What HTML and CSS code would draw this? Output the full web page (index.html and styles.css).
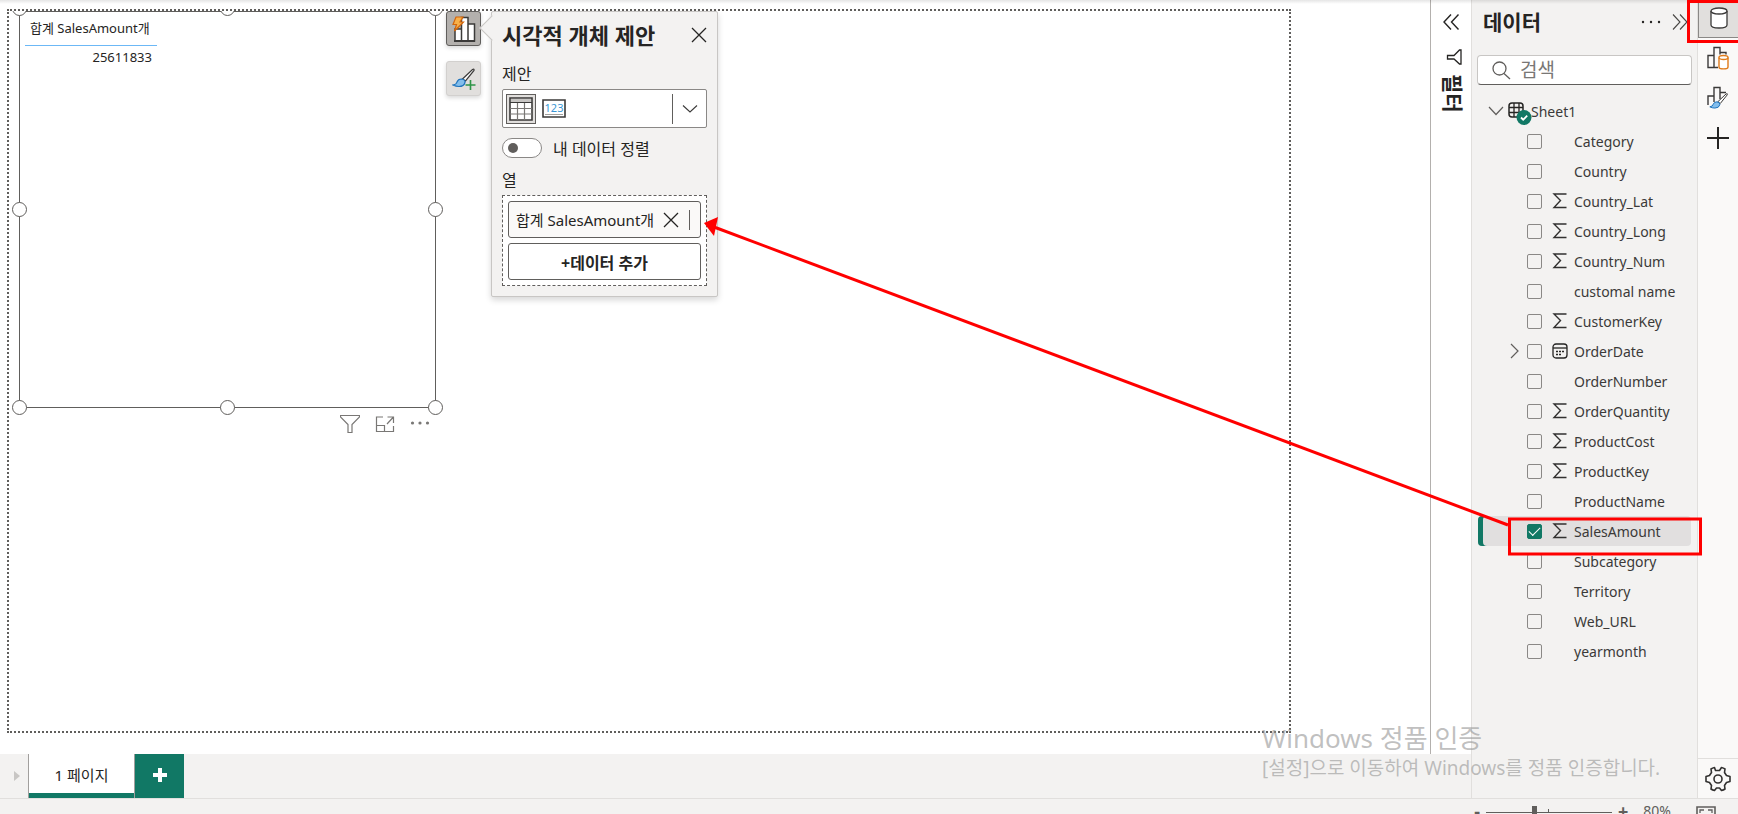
FILE: index.html
```html
<!DOCTYPE html>
<html lang="ko">
<head>
    <meta charset="UTF-8">
    <meta name="viewport" content="width=device-width, initial-scale=1.0">
    <title>Power BI Desktop</title>
    <link rel="stylesheet" href="styles.css">
</head>
<body>
    <!-- Shared icons -->
    <svg class="sprite">
        <symbol id="sigma" viewBox="0 0 14 16"><path d="M13.500 1H1l6.500 6.500L1 14.500H13.500" fill="none" stroke="#323130" stroke-width="1.400"/></symbol>
        <symbol id="close" viewBox="0 0 16 16"><path d="M1 1l14 14M15 1L1 15" fill="none" stroke="#252423" stroke-width="1.300"/></symbol>
        <symbol id="brush" viewBox="0 0 24 20">
            <path d="M10.500 11L20.500 1.500q2-1 1.500 1L13.500 13z" fill="#fff" stroke="#3b3a39" stroke-width="1.200"/>
            <path d="M9.500 11q4 .5 3.500 3.500-1 4-6 4Q4 18.500 1 17q3.500-.5 4-3 1-3 4.500-3z" fill="#83beec" stroke="#1f74bd" stroke-width="1.200"/>
        </symbol>
    </svg>

    <div class="app">
        <div class="workspace">
            <div class="report">
                <div class="report-top">
                    <main class="canvas-area">
                        <div class="page">
                            <!-- Table visual -->
                            <div class="visual-clip">
                                <section class="visual">
                                    <table>
                                        <thead><tr><th>합계 SalesAmount개</th></tr></thead>
                                        <tbody><tr><td>25611833</td></tr></tbody>
                                    </table>
                                    <span class="handle top left"></span>
                                    <span class="handle top center"></span>
                                    <span class="handle top right"></span>
                                    <span class="handle middle left"></span>
                                    <span class="handle middle right"></span>
                                    <span class="handle bottom left"></span>
                                    <span class="handle bottom center"></span>
                                    <span class="handle bottom right"></span>
                                    <div class="visual-actions">
                                        <button type="button" aria-label="필터"><svg width="20" height="20" viewBox="0 0 20 20"><path d="M.5 1.500h19v1.500L12 10.500v8H8v-8L.5 3z" fill="none" stroke="#797775" stroke-width="1.200"/></svg></button>
                                        <button type="button" aria-label="포커스 모드"><svg width="20" height="20" viewBox="0 0 20 20"><path d="M8 3H1.500v14.500h17V12M1.500 11.500h8v6M12 10l6-6.500M12.500 3h6v6" fill="none" stroke="#797775" stroke-width="1.200"/></svg></button>
                                        <button type="button" aria-label="추가 옵션"><svg width="20" height="20" viewBox="0 0 20 20"><g fill="#797775"><circle cx="2.500" cy="9" r="1.600"/><circle cx="10" cy="9" r="1.600"/><circle cx="17.500" cy="9" r="1.600"/></g></svg></button>
                                    </div>
                                </section>
                            </div>

                            <div class="visual-tools">
                                <button type="button" class="tool active" aria-label="시각화 빌드">
                                    <svg width="26" height="28" viewBox="0 0 26 28">
                                        <path d="M4 26V14h6.500v12M10.500 26V2.500H17V26M17 26V9h6.500v17z" fill="#fff" stroke="#3b3a39" stroke-width="1.500"/>
                                        <path d="M3 26h21" stroke="#3b3a39" stroke-width="2"/>
                                        <path d="M5 2h7L9 7h3.500L3.500 16l2-6.500H2z" fill="#f8b04a" stroke="#d2650c" stroke-width="1.200"/>
                                    </svg>
                                </button>
                                <button type="button" class="tool" aria-label="서식 추가">
                                    <svg width="26" height="26" viewBox="0 0 26 26"><use href="#brush" x="1" y="2" width="24" height="20"/><path d="M19.500 14v10M14.500 19h10" stroke="#2e9548" stroke-width="1.600"/></svg>
                                </button>
                            </div>

                            <!-- Suggestion popup -->
                            <section class="suggest">
                                <header>
                                    <h2>시각적 개체 제안</h2>
                                    <button type="button" class="plain" aria-label="닫기"><svg width="16" height="16"><use href="#close"/></svg></button>
                                </header>
                                <h3>제안</h3>
                                <div class="picker">
                                    <button type="button" class="choice selected" aria-label="테이블">
                                        <svg width="24" height="24" viewBox="0 0 24 24"><path d="M1 1h22v22H1z" fill="#fff" stroke="#3b3a39" stroke-width="1.600"/><path d="M2 2h20v3H2z" fill="#c8c6c4"/><path d="M1 5.500h22" stroke="#3b3a39"/><path d="M1 11.500h22M1 17h22M8.500 6v17M15.500 6v17" stroke="#797775" stroke-width="1.200"/></svg>
                                    </button>
                                    <button type="button" class="choice" aria-label="카드">
                                        <svg width="24" height="19" viewBox="0 0 24 19"><path d="M1 1h22v17H1z" fill="#fff" stroke="#3b3a39" stroke-width="1.600"/><text x="12" y="13" text-anchor="middle" class="card-num">123</text><path d="M3 15.500h18" stroke="#a19f9d"/></svg>
                                    </button>
                                    <button type="button" class="more" aria-label="더 보기"><svg width="16" height="10" viewBox="0 0 16 10"><path d="M1 1.500l7 6.500 7-6.500" fill="none" stroke="#3b3a39" stroke-width="1.100"/></svg></button>
                                </div>
                                <label class="switch"><input type="checkbox"><span>내 데이터 정렬</span></label>
                                <h3>열</h3>
                                <div class="well">
                                    <div class="well-field">
                                        <span>합계 SalesAmount개</span>
                                        <button type="button" class="plain" aria-label="제거"><svg width="16" height="16"><use href="#close"/></svg></button>
                                    </div>
                                    <button type="button" class="well-add">+데이터 추가</button>
                                </div>
                            </section>
                        </div>
                    </main>

                    <aside class="filter-pane">
                        <button type="button" class="plain" aria-label="확장"><svg width="18" height="16" viewBox="0 0 18 16"><path d="M9 .5L2 8l7 7.500M16.500 .5l-7 7.500 7 7.500" fill="none" stroke="#252423" stroke-width="1.400"/></svg></button>
                        <svg class="funnel" width="16" height="16" viewBox="0 0 16 16"><path d="M15 1v14h-1.500L8 10H1.500V6.500H8L13.500 1z" fill="none" stroke="#252423" stroke-width="1.300"/></svg>
                        <h2>필터</h2>
                    </aside>
                </div>

                <nav class="tabs">
                    <button type="button" class="tab-next" aria-label="다음"><svg width="6" height="10"><path d="M0 0l6 5-6 5z" fill="#c8c6c4"/></svg></button>
                    <button type="button" class="tab">1 페이지</button>
                    <button type="button" class="tab-add" aria-label="새 페이지"><svg width="14" height="14"><path d="M7 0v14M0 7h14" stroke="#fff" stroke-width="4"/></svg></button>
                </nav>
            </div>

            <!-- Data pane -->
            <aside class="data-pane">
                <header>
                    <h2>데이터</h2>
                    <button type="button" class="plain" aria-label="옵션"><svg width="20" height="16"><g fill="#252423"><circle cx="2" cy="8" r="1.200"/><circle cx="10" cy="8" r="1.200"/><circle cx="18" cy="8" r="1.200"/></g></svg></button>
                    <button type="button" class="plain" aria-label="축소"><svg width="16" height="16" viewBox="0 0 16 16"><path d="M1 .5L8 8l-7 7.500M8 .5L15 8l-7 7.500" fill="none" stroke="#484644" stroke-width="1.100"/></svg></button>
                </header>
                <label class="search">
                    <svg width="19" height="19" viewBox="0 0 19 19"><circle cx="7.500" cy="7.500" r="6.500" fill="none" stroke="#605e5c" stroke-width="1.300"/><path d="M12 12.500l6 5.500" stroke="#605e5c" stroke-width="1.300"/></svg>
                    <input type="text" placeholder="검색" aria-label="검색">
                </label>
                <div class="sheet">
                    <svg width="16" height="10" viewBox="0 0 16 10"><path d="M1 1l7 7.500L15 1" fill="none" stroke="#605e5c" stroke-width="1.200"/></svg>
                    <svg class="sheet-icon" width="24" height="24" viewBox="0 0 24 24">
                        <rect x="1" y="2" width="14" height="14" rx="3" fill="none" stroke="#252423" stroke-width="1.500"/>
                        <path d="M6 2v14M11 2v14M1 6.500h14M1 11.500h14" stroke="#252423" stroke-width="1.300"/>
                        <circle cx="16" cy="16.500" r="7.500" fill="#117865"/><path d="M13 16.500l2.200 2.200 4-4" fill="none" stroke="#fff" stroke-width="1.800"/>
                    </svg>
                    <span>Sheet1</span>
                </div>
                <ul class="fields">
                    <li><label><input type="checkbox"><i></i>Category</label></li>
                    <li><label><input type="checkbox"><i></i>Country</label></li>
                    <li><label><input type="checkbox"><svg><use href="#sigma"/></svg>Country_Lat</label></li>
                    <li><label><input type="checkbox"><svg><use href="#sigma"/></svg>Country_Long</label></li>
                    <li><label><input type="checkbox"><svg><use href="#sigma"/></svg>Country_Num</label></li>
                    <li><label><input type="checkbox"><i></i>customal name</label></li>
                    <li><label><input type="checkbox"><svg><use href="#sigma"/></svg>CustomerKey</label></li>
                    <li>
                        <button type="button" class="plain expand" aria-label="펼치기"><svg viewBox="0 0 9 16"><path d="M1 1l7 7-7 7" fill="none" stroke="#605e5c" stroke-width="1.200"/></svg></button>
                        <label><input type="checkbox"><svg viewBox="0 0 16 16"><rect x="1" y="1" width="14" height="14" rx="3" fill="none" stroke="#252423" stroke-width="1.300"/><path d="M1 5h14" stroke="#252423" stroke-width="1.300"/><path d="M4 8.500h2M7 8.500h2M10 8.500h2M4 11.500h2M7 11.500h2" stroke="#252423" stroke-width="1.500"/></svg>OrderDate</label>
                    </li>
                    <li><label><input type="checkbox"><i></i>OrderNumber</label></li>
                    <li><label><input type="checkbox"><svg><use href="#sigma"/></svg>OrderQuantity</label></li>
                    <li><label><input type="checkbox"><svg><use href="#sigma"/></svg>ProductCost</label></li>
                    <li><label><input type="checkbox"><svg><use href="#sigma"/></svg>ProductKey</label></li>
                    <li><label><input type="checkbox"><i></i>ProductName</label></li>
                    <li class="selected"><label><input type="checkbox" checked><svg><use href="#sigma"/></svg>SalesAmount</label></li>
                    <li><label><input type="checkbox"><i></i>Subcategory</label></li>
                    <li><label><input type="checkbox"><i></i>Territory</label></li>
                    <li><label><input type="checkbox"><i></i>Web_URL</label></li>
                    <li><label><input type="checkbox"><i></i>yearmonth</label></li>
                </ul>
            </aside>

            <!-- Pane switcher -->
            <nav class="rail">
                <button type="button" class="active" aria-label="데이터"><svg width="18" height="22" viewBox="0 0 18 22"><path d="M1 4v14c0 4 16 4 16 0V4" fill="#fff" stroke="#3b3a39" stroke-width="1.300"/><ellipse cx="9" cy="4" rx="8" ry="3" fill="#fff" stroke="#3b3a39" stroke-width="1.300"/></svg></button>
                <button type="button" aria-label="시각화"><svg width="22" height="24" viewBox="0 0 22 24"><path d="M11 21.500H1V9.500h6v12M7 9.500V1.500h6v7M13 6.500h6v2" fill="none" stroke="#3b3a39" stroke-width="1.400"/><path d="M12 11.500v9.500c0 2.500 9 2.500 9 0v-9.500" fill="#fff" stroke="#e07b1a" stroke-width="1.400"/><ellipse cx="16.500" cy="11.500" rx="4.500" ry="2" fill="#fff" stroke="#e07b1a" stroke-width="1.400"/></svg></button>
                <button type="button" aria-label="서식"><svg width="22" height="24" viewBox="0 0 22 24"><path d="M1 19V10h6v6M7 10V1.500h6V13M13 6.500h6" fill="none" stroke="#3b3a39" stroke-width="1.400"/><use href="#brush" x="2" y="6" width="20" height="18"/></svg></button>
                <button type="button" aria-label="추가"><svg width="22" height="22"><path d="M11 0v22M0 11h22" stroke="#252423" stroke-width="2"/></svg></button>
                <button type="button" class="settings" aria-label="설정"><svg width="26" height="26" viewBox="0 0 26 26"><path d="M10.500 4.500L9.500 1.500q-2 .5-3.500 1.500l.5 3.500-2 3L1 10.500v5l3.500 1 2 3-.5 3.500q1.500 1 3.500 1.500l2-2.500h3l2 2.500q2-.5 3.500-1.500l-.5-3.500 2-3 3.500-1v-5l-3.500-1-2-3 .5-3.500q-1.500-1-3.500-1.500l-2 3z" fill="none" stroke="#323130" stroke-width="1.600" stroke-linejoin="round"/><circle cx="13" cy="13" r="4" fill="none" stroke="#323130" stroke-width="1.600"/></svg></button>
            </nav>
        </div>

        <footer class="status">
            <button type="button" class="plain zoom-step">-</button>
            <input type="range" min="0" max="100" value="38" aria-label="확대/축소">
            <button type="button" class="plain zoom-step">+</button>
            <span class="zoom-value">80%</span>
            <button type="button" class="plain fit" aria-label="페이지에 맞추기"><svg width="20" height="16" viewBox="0 0 20 16"><path d="M1 1h18v14H1z" fill="none" stroke="#605e5c" stroke-width="1.600"/><path d="M4 7V4h4M12 4h4v3M4 10v3h4M12 13h4v-3" fill="none" stroke="#605e5c" stroke-width="1.300"/></svg></button>
        </footer>

        <div class="watermark">
            <p class="watermark-title">Windows 정품 인증</p>
            <p>[설정]으로 이동하여 Windows를 정품 인증합니다.</p>
        </div>

        <!-- Red callouts -->
        <svg class="callouts" viewBox="0 0 1738 814" preserveAspectRatio="none">
            <path d="M1688.500 1.500h60v40h-60zM1509.500 519h191v35h-191z"/>
            <path d="M1508 525L714 227"/>
            <path class="tip" d="M704 223l14-6-4 19z"/>
        </svg>
    </div>
</body>
</html>
```
FILE: styles.css
```css
* {
    margin: 0;
    padding: 0;
    box-sizing: border-box;
}

body {
    font-family: "Noto Sans", "Noto Sans CJK KR", sans-serif;
    font-size: 14px;
    color: #252423;
    background-color: #fff;
}

button,
input {
    font: inherit;
    color: inherit;
}

svg {
    display: block;
    flex: none;
}

.sprite {
    position: absolute;
    width: 0;
    height: 0;
}

.plain {
    display: flex;
    background: none;
    border: none;
}

.app {
    position: relative;
    display: flex;
    flex-direction: column;
    height: 100vh;
    overflow: hidden;
}

.app::before {
    content: "";
    position: absolute;
    top: 0;
    left: 0;
    right: 0;
    height: 4px;
    background: linear-gradient(rgba(0, 0, 0, 0.1), transparent);
}

.workspace {
    flex: 1;
    display: flex;
    min-height: 0;
}

.report {
    flex: 1;
    display: flex;
    flex-direction: column;
}

.report-top {
    flex: 1;
    display: flex;
}

/* Canvas */
.canvas-area {
    flex: 1;
    display: flex;
    padding: 9px 139px 21px 7px;
}

.page {
    position: relative;
    flex: 1;
    border: 2px dotted #605e5c;
}

.visual-clip {
    position: absolute;
    inset: 0;
    overflow: hidden;
}

.visual {
    position: absolute;
    top: 0;
    left: 10px;
    width: 417px;
    height: 397px;
    padding: 3px 5px;
    border: 1px solid #605e5c;
}

.visual table {
    width: 132px;
    border-collapse: collapse;
    font-size: 13px;
    line-height: 18px;
}

.visual th {
    height: 30px;
    padding: 0 0 4px 5px;
    font-weight: normal;
    text-align: left;
    white-space: nowrap;
    border-bottom: 1px solid #6cb8f6;
}

.visual td {
    padding: 2px 5px;
    text-align: right;
}

.handle {
    position: absolute;
    width: 15px;
    height: 15px;
    border: 1px solid #605e5c;
    border-radius: 50%;
    background-color: #fff;
}

.top { top: -11px; }
.middle { top: calc(50% - 8px); }
.bottom { bottom: -8px; }
.left { left: -8px; }
.center { left: calc(50% - 8px); }
.right { right: -8px; }

.visual-actions {
    position: absolute;
    top: 402px;
    right: 5px;
    display: flex;
    gap: 15px;
}

.visual-actions button {
    display: flex;
    background: none;
    border: none;
}

.visual-tools {
    position: absolute;
    top: 0;
    left: 437px;
    display: flex;
    flex-direction: column;
    gap: 15px;
}

.tool {
    display: flex;
    align-items: center;
    justify-content: center;
    width: 35px;
    height: 35px;
    border: 1px solid #d2d0ce;
    border-radius: 3px;
    background-color: #e1dfdd;
    box-shadow: 0 2px 4px rgba(0, 0, 0, 0.15);
}

.tool.active {
    border-color: #605e5c;
    background-color: #b3b0ad;
}

/* Suggestion popup */
.suggest {
    position: absolute;
    top: 0;
    left: 482px;
    width: 227px;
    padding: 10px;
    border: 1px solid #c8c6c4;
    border-radius: 2px;
    background-color: #f3f2f1;
    box-shadow: 0 3px 6px rgba(0, 0, 0, 0.16);
}

.suggest::before {
    content: "";
    position: absolute;
    top: 7px;
    left: -9px;
    width: 17px;
    height: 17px;
    border-left: 1px solid #c8c6c4;
    border-bottom: 1px solid #c8c6c4;
    background-color: #f3f2f1;
    transform: rotate(45deg);
}

.suggest header {
    position: relative;
    display: flex;
    align-items: center;
    justify-content: space-between;
    height: 26px;
}

.suggest h2 {
    font-size: 22px;
    line-height: 26px;
    white-space: nowrap;
}

.suggest h3 {
    margin-top: 15px;
    font-size: 16px;
    font-weight: normal;
    line-height: 22px;
}

.picker {
    display: flex;
    align-items: center;
    height: 39px;
    margin-top: 4px;
    padding: 4px 0 4px 3px;
    border: 1px solid #8a8886;
    border-radius: 2px;
    background-color: #fff;
}

.choice {
    display: flex;
    align-items: center;
    justify-content: center;
    width: 30px;
    height: 30px;
    margin-right: 3px;
    border: none;
    background: none;
}

.choice.selected {
    border: 1px solid #605e5c;
    background-color: #e1dfdd;
}

.card-num {
    font-size: 11px;
    fill: #3a96d4;
}

.more {
    display: flex;
    align-items: center;
    justify-content: center;
    width: 34px;
    height: 30px;
    margin-left: auto;
    border: none;
    border-left: 1px solid #605e5c;
    background: none;
}

.switch {
    display: flex;
    align-items: center;
    gap: 11px;
    height: 20px;
    margin-top: 10px;
    font-size: 16px;
}

.switch input {
    appearance: none;
    width: 40px;
    height: 20px;
    padding: 4px 5px;
    border: 1px solid #8a8886;
    border-radius: 10px;
    background-color: #fff;
}

.switch input::before {
    content: "";
    display: block;
    width: 10px;
    height: 10px;
    border-radius: 50%;
    background-color: #605e5c;
}

.switch + h3 {
    margin-top: 11px;
}

.well {
    display: flex;
    flex-direction: column;
    gap: 5px;
    margin-top: 4px;
    padding: 5px;
    border: 1px dashed #605e5c;
    background-color: #fff;
}

.well-field,
.well-add {
    height: 37px;
    border: 1px solid #605e5c;
    border-radius: 3px;
    background-color: #fff;
}

.well-field {
    display: flex;
    align-items: center;
    padding: 0 10px 0 7px;
    background-color: #faf9f8;
    font-size: 15px;
    white-space: nowrap;
}

.well-field .plain {
    margin-left: auto;
    padding: 2px 10px 2px 0;
    border-right: 1px solid #605e5c;
}

.well-add {
    font-size: 16px;
    font-weight: bold;
}

/* Filter pane */
.filter-pane {
    display: flex;
    flex-direction: column;
    align-items: center;
    width: 41px;
    padding-top: 14px;
    border-left: 1px solid #b3b0ad;
}

.funnel {
    margin: 19px 0 9px 6px;
}

.filter-pane h2 {
    margin-left: 4px;
    font-size: 21px;
    line-height: 24px;
    writing-mode: vertical-rl;
    text-orientation: sideways;
}

/* Page tabs */
.tabs {
    display: flex;
    height: 44px;
    background-color: #f3f2f1;
}

.tab-next {
    display: flex;
    align-items: center;
    justify-content: flex-end;
    width: 28px;
    padding-right: 8px;
    border: none;
    background: none;
}

.tab {
    width: 107px;
    padding-bottom: 3px;
    border: 1px solid #a19f9d;
    border-width: 0 1px;
    background-color: #fff;
    box-shadow: inset 0 -5px #117865;
    font-size: 15px;
}

.tab-add {
    display: flex;
    align-items: center;
    justify-content: center;
    width: 49px;
    padding-bottom: 3px;
    border: none;
    background-color: #117865;
}

/* Data pane */
.data-pane {
    width: 226px;
    border-left: 1px solid #e1dfdd;
    background-color: #f3f2f1;
}

.data-pane header {
    display: flex;
    align-items: center;
    gap: 11px;
    height: 44px;
    padding: 0 9px 0 11px;
}

.data-pane h2 {
    margin-right: auto;
    font-size: 21px;
    line-height: 28px;
}

.search {
    display: flex;
    align-items: center;
    gap: 9px;
    height: 30px;
    margin: 11px 5px;
    padding: 0 14px;
    border: 1px solid #c8c6c4;
    border-bottom-color: #605e5c;
    border-radius: 4px;
    background-color: #fff;
}

.search input {
    width: 100%;
    border: none;
    outline: none;
    background: none;
    font-size: 19px;
    line-height: 26px;
}

.search input::placeholder {
    color: #797775;
}

.sheet {
    display: flex;
    align-items: center;
    height: 30px;
    padding-left: 16px;
    color: #3b3a39;
}

.sheet-icon {
    margin: 4px 0 0 4px;
}

.sheet span {
    margin-left: -1px;
}

.fields {
    list-style: none;
    color: #3b3a39;
}

.fields li {
    position: relative;
    height: 30px;
    margin: 0 6px;
    padding-left: 49px;
}

.fields label {
    display: flex;
    align-items: center;
    height: 30px;
}

.fields label svg,
.fields i {
    width: 16px;
    height: 16px;
    margin: 0 6px 0 10px;
}

.fields input {
    appearance: none;
    display: flex;
    align-items: center;
    justify-content: center;
    width: 15px;
    height: 15px;
    border: 1px solid #8a8886;
    border-radius: 2px;
}

.fields input:checked {
    border-color: #117865;
    background-color: #117865;
}

.fields input:checked::before {
    content: "";
    width: 10px;
    height: 5px;
    margin-bottom: 3px;
    border-left: 1px solid #fff;
    border-bottom: 1px solid #fff;
    transform: rotate(-45deg);
}

.fields .selected {
    border-radius: 4px;
    background-color: #e1dfdf;
    box-shadow: inset 5px 0 #117865;
}

.expand {
    position: absolute;
    top: 7px;
    left: 32px;
}

.expand svg {
    width: 9px;
    height: 16px;
}

/* Right rail */
.rail {
    display: flex;
    flex-direction: column;
    width: 41px;
    border-left: 1px solid #e1dfdd;
    background-color: #faf9f8;
}

.rail button {
    display: flex;
    align-items: center;
    justify-content: center;
    height: 40px;
    border: none;
    background: none;
}

.rail .active {
    height: 38px;
    padding-bottom: 2px;
    border: 1px solid #8a8886;
    border-width: 0 0 1px 1px;
    background-color: #e1dfdd;
}

.rail .settings {
    margin-top: auto;
    border-top: 1px solid #e1dfdd;
}

/* Status bar */
.status {
    display: flex;
    align-items: flex-start;
    justify-content: flex-end;
    height: 16px;
    padding: 7px 22px 0 0;
    border-top: 1px solid #e1dfdd;
    background-color: #f3f2f1;
    color: #605e5c;
    overflow: hidden;
}

.zoom-step {
    font-size: 18px;
    font-weight: bold;
    line-height: 10px;
}

.status input {
    appearance: none;
    width: 126px;
    height: 14px;
    margin: 0 6px;
    background:
        linear-gradient(#605e5c, #605e5c) 62px 3px / 1px 4px no-repeat,
        linear-gradient(#605e5c, #605e5c) 0 6px / 100% 1px no-repeat;
}

.status input::-webkit-slider-thumb {
    appearance: none;
    width: 5px;
    height: 14px;
    background-color: #605e5c;
}

.zoom-value {
    margin: 0 25px 0 15px;
    line-height: 10px;
}

/* Overlays */
.watermark {
    position: absolute;
    right: 74px;
    bottom: 32px;
    width: 402px;
    font-size: 19px;
    line-height: 28px;
    white-space: nowrap;
    color: rgba(150, 150, 150, 0.6);
}

.watermark-title {
    font-size: 26px;
    line-height: 32px;
}

.callouts {
    position: absolute;
    inset: 0;
    width: 100%;
    height: 100%;
    fill: none;
    stroke: #f00;
    stroke-width: 3;
    pointer-events: none;
}

.callouts .tip {
    fill: #f00;
    stroke: none;
}
```
